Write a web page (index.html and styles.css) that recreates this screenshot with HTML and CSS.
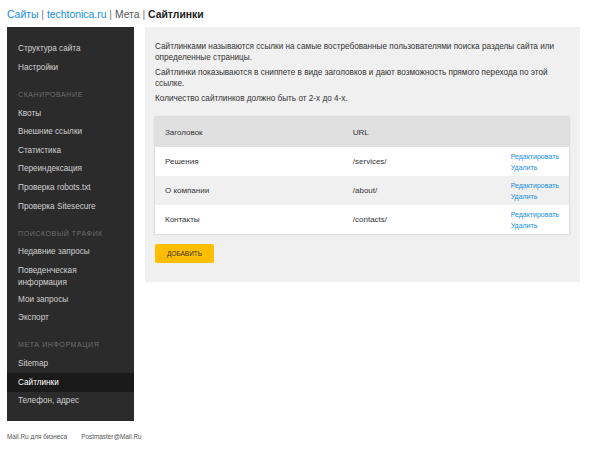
FILE: index.html
```html
<!DOCTYPE html>
<html lang="ru">
<head>
  <meta charset="UTF-8">
  <meta name="viewport" content="width=device-width, initial-scale=1.0">
  <title>Сайтлинки</title>
  <link rel="stylesheet" href="styles.css">
</head>
<body>
  <div class="page">
    <div class="breadcrumbs">
      <a href="#">Сайты</a> <span class="sep">|</span>
      <a href="#">techtonica.ru</a> <span class="sep">|</span>
      <span class="crumb">Мета</span> <span class="sep">|</span>
      <b>Сайтлинки</b>
    </div>

    <div class="layout">
      <ul class="sidebar">
        <li class="item">Структура сайта</li>
        <li class="item">Настройки</li>
        <li class="heading">Сканирование</li>
        <li class="item">Квоты</li>
        <li class="item">Внешние ссылки</li>
        <li class="item">Статистика</li>
        <li class="item">Переиндексация</li>
        <li class="item">Проверка robots.txt</li>
        <li class="item">Проверка Sitesecure</li>
        <li class="heading">Поисковый трафик</li>
        <li class="item">Недавние запросы</li>
        <li class="item two-line">Поведенческая<br>информация</li>
        <li class="item">Мои запросы</li>
        <li class="item">Экспорт</li>
        <li class="heading">Мета информация</li>
        <li class="item">Sitemap</li>
        <li class="item active">Сайтлинки</li>
        <li class="item">Телефон, адрес</li>
      </ul>

      <div class="content">
        <p>Сайтлинками называются ссылки на самые востребованные пользователями поиска разделы сайта или определенные страницы.</p>
        <p>Сайтлинки показываются в сниппете в виде заголовков и дают возможность прямого перехода по этой ссылке.</p>
        <p>Количество сайтлинков должно быть от 2-х до 4-х.</p>

        <table class="links-table">
          <thead>
            <tr>
              <th class="col-title">Заголовок</th>
              <th class="col-url">URL</th>
              <th></th>
            </tr>
          </thead>
          <tbody>
            <tr>
              <td>Решения</td>
              <td>/services/</td>
              <td class="actions"><a href="#">Редактировать</a><a href="#">Удалить</a></td>
            </tr>
            <tr>
              <td>О компании</td>
              <td>/about/</td>
              <td class="actions"><a href="#">Редактировать</a><a href="#">Удалить</a></td>
            </tr>
            <tr>
              <td>Контакты</td>
              <td>/contacts/</td>
              <td class="actions"><a href="#">Редактировать</a><a href="#">Удалить</a></td>
            </tr>
          </tbody>
        </table>

        <button class="add-btn">Добавить</button>
      </div>
    </div>

    <div class="footer">
      <a href="#">Mail.Ru для бизнеса</a>
      <a href="#">Postmaster@Mail.Ru</a>
    </div>
  </div>
</body>
</html>
```

FILE: styles.css
```css
* {
  box-sizing: border-box;
  margin: 0;
  padding: 0;
}

body {
  font-family: Arial, "Liberation Sans", sans-serif;
  background: #fff;
  color: #333;
}

a {
  color: #168de2;
  text-decoration: none;
}

.page {
  padding: 0 7px;
}

.breadcrumbs {
  height: 27px;
  padding-top: 8px;
  font-size: 10.4px;
  line-height: 13px;
  color: #555;
}

.breadcrumbs .sep {
  color: #777;
}

.breadcrumbs b {
  color: #222;
}

.layout {
  display: flex;
  align-items: flex-start;
  gap: 11px;
}

.sidebar {
  list-style: none;
  width: 127px;
  flex-shrink: 0;
  background: #2b2b2b;
  padding: 13px 0 11px;
}

.sidebar .item {
  padding: 3.3px 11px;
  font-size: 8.2px;
  line-height: 12px;
  color: #d0d0d0;
}

.sidebar .two-line {
  padding-bottom: 1.5px;
}

.sidebar .active {
  background: #1a1a1a;
  color: #fff;
}

.sidebar .heading {
  margin-top: 8.5px;
  padding: 3.3px 11px;
  font-size: 7px;
  line-height: 12px;
  letter-spacing: 0.6px;
  text-transform: uppercase;
  color: #6e6e6e;
}

.content {
  width: 435px;
  background: #f0f0f0;
  padding: 14px 11px 19px 10px;
  font-size: 8.2px;
  line-height: 11px;
}

.content p {
  margin-bottom: 4px;
}

.links-table {
  width: 100%;
  margin-top: 13px;
  border-collapse: collapse;
  background: #fff;
  box-shadow: 0 0 2px rgba(0, 0, 0, 0.25);
  font-size: 8px;
}

.links-table th {
  height: 30px;
  background: #e0e0e0;
  text-align: left;
  font-weight: normal;
  color: #333;
  padding: 0 10px;
}

.links-table .col-title {
  width: 188px;
}

.links-table .col-url {
  width: 168px;
}

.links-table td {
  height: 29px;
  padding: 0 10px;
  color: #333;
}

.links-table tbody tr:nth-child(2) td {
  background: #f0f0f0;
}

.links-table .actions {
  padding-left: 0;
}

.links-table .actions a {
  display: block;
  line-height: 11px;
  font-size: 7px;
}

.add-btn {
  margin-top: 10px;
  width: 59px;
  height: 19px;
  border: none;
  border-radius: 2px;
  background: #ffbe00;
  color: #333;
  font-family: Arial, "Liberation Sans", sans-serif;
  font-size: 6.5px;
  text-transform: uppercase;
  cursor: pointer;
}

.footer {
  display: flex;
  gap: 14px;
  padding-top: 12px;
  font-size: 6.4px;
}

.footer a {
  color: #555;
}
```
